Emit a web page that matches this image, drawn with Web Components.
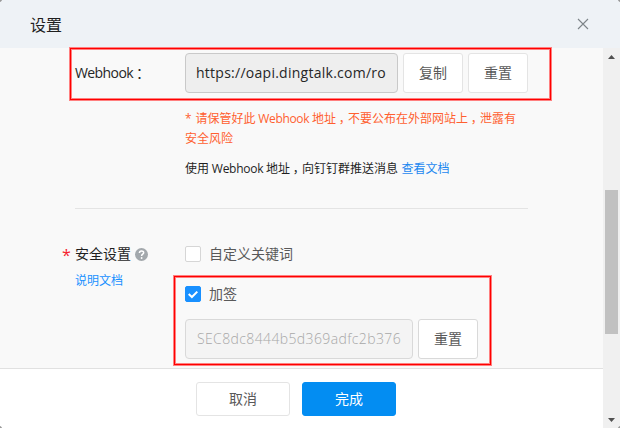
<!DOCTYPE html>
<html lang="zh-CN">
<head>
<meta charset="utf-8">
<title>设置</title>
<style>
html,body{margin:0;height:100%;background:#fff}
body{font-family:"Open Sans","Noto Sans CJK SC",sans-serif;overflow:hidden}
</style>
</head>
<body>
<settings-dialog></settings-dialog>
<script>
const define = (name, html, setup) => {
  const tpl = document.createElement('template');
  tpl.innerHTML = html;
  customElements.define(name, class extends HTMLElement {
    constructor() {
      super();
      this.attachShadow({mode: 'open'}).append(tpl.content.cloneNode(true));
    }
    connectedCallback() { if (setup) setup(this); }
  });
};

// Latin run tracked to a given width
define('latin-run', `<style>:host{display:inline-block;white-space:pre}</style><slot></slot>`, el => {
  const natural = el.getBoundingClientRect().width;
  const n = el.textContent.length;
  if (n) el.style.letterSpacing = ((+el.getAttribute('w') - natural) / n) + 'px';
});

// Full-width punctuation set toward the middle of its cell
define('wide-mark', `<style>:host{display:inline-block;box-sizing:border-box;width:1em;padding-left:.22em;font-family:"Noto Sans CJK SC",sans-serif;font-feature-settings:"halt";line-height:1}</style><slot></slot>`);

define('ui-button', `<style>
:host{display:flex;box-sizing:border-box;flex:none;width:60px;height:40px;border:1px solid #e4e4e4;border-radius:3px;background:#fff;color:#595959;font-size:14px;line-height:20px;align-items:center;justify-content:center}
:host([size=footer]){width:94px;height:34px}
:host([strong]){border-color:#d9d9d9}
:host([primary]){background:#038df2;border-color:#038df2;color:#fff}
</style><slot></slot>`);

define('ui-field', `<style>
:host{display:flex;box-sizing:border-box;flex:none;width:213px;height:40px;border:1px solid #c9c9c9;border-radius:4px;background:#eee;color:#262626;font-size:14px;line-height:20px;align-items:center;padding:0 10px;overflow:hidden}
:host([disabled]){width:228px;padding:0 11px;background:#f4f4f4;border-color:#d9d9d9;color:#a8a8a8;font-weight:300}
</style><slot></slot>`);

define('ui-check', `<style>
:host{display:flex;align-items:center;gap:8px;height:20px;font-size:14px;line-height:20px;color:#595959}
i{box-sizing:border-box;width:16px;height:16px;border:1px solid #d6d6d6;border-radius:2px;background:#fff;display:block}
svg{display:none}
:host([checked]) i{background:#1890ff;border-color:#1890ff}
:host([checked]) svg{display:block}
</style><i><svg width="14" height="14" viewBox="0 0 14 14" fill="none" stroke="#fff" stroke-width="2"><path d="M2.7 7 L5.9 10 L11.3 4.6"/></svg></i><span><slot></slot></span>`);

// Red annotation frame laid over the form
define('mark-frame', `<style>
:host{position:absolute;box-sizing:border-box;border:1px solid #f00;box-shadow:0 0 0 1px #ff8080,inset 0 0 0 1px #ff8080;pointer-events:none}
</style>`);

define('scroll-rail', `<style>
:host{display:flex;flex-direction:column;align-items:center;width:17px;background:#f0f0f0}
svg{display:block;flex:none}
.track{flex:1;padding-top:125px;box-sizing:border-box}
b{display:block;width:13px;height:144px;background:#c1c1c1}
</style>
<svg width="17" height="17" fill="#505050"><path d="M5 11h7L8.5 7z"/></svg>
<div class="track"><b></b></div>
<svg width="17" height="17" fill="#505050"><path d="M5 7h7L8.5 11z"/></svg>`);

define('dialog-header', `<style>
:host{display:flex;box-sizing:border-box;height:48px;background:#eef2f6;align-items:center;justify-content:space-between;padding:2px 31px 0 30px;font-size:16px;line-height:24px;color:#1f1f1f}
svg{margin-top:-2px}
</style><span><slot></slot></span>
<svg width="12" height="12" viewBox="0 0 12 12" fill="none" stroke="#7d8489" stroke-width="1.1"><path d="M1 1l10 10M11 1L1 11"/></svg>`);

define('form-row', `<style>
:host{display:grid;grid-template-columns:110px 1fr}
</style><slot name="label"></slot><slot></slot>`);

// Rounded window corners
define('window-corners', `<style>
:host{position:absolute;inset:0;pointer-events:none;background:
radial-gradient(circle at 0 0,#999 1.4px,transparent 2.2px),
radial-gradient(circle at 100% 0,#999 1.4px,transparent 2.2px),
radial-gradient(circle at 0 100%,#999 1.4px,transparent 2.2px),
radial-gradient(circle at 100% 100%,#999 1.4px,transparent 2.2px)}
</style>`);

define('settings-dialog', `<style>
:host{display:flex;flex-direction:column;position:relative;width:620px;height:428px;overflow:hidden}
.main{display:flex;flex:1;min-height:0}
.left{display:flex;flex-direction:column;width:603px}
.body{flex:1;background:#f9f9f9;box-sizing:border-box;padding:5px 75px 0;font-size:14px;line-height:20px;color:#262626}
.line{display:flex;gap:5px}
.label{line-height:40px}
.notes{font-size:12px;padding-left:110px;line-height:20px;padding-top:16px;white-space:nowrap;height:84px}
.warn{color:#ff5f30}
.tip{padding-top:10px;color:#1f1f1f}
a{color:#1c88f0}
hr{border:0;height:1px;background:#e4e4e4;margin:15px 0 35px}
.opts{display:flex;flex-direction:column;gap:20px}
.opts .line{margin-top:-5px}
.sec{display:flex;align-items:center;gap:4px;margin-left:-13px;color:#1f1f1f}
.req{width:9px;height:20px;color:#f5222d;font-size:16px;line-height:23px}
.doc{font-size:12px;line-height:20px;margin-top:7px}
.doc a{color:#1890ff}
footer{box-sizing:border-box;height:60px;border-top:1px solid #e1e1e1;background:#fff;padding:13px 0 0 196px;display:flex;gap:12px}
.one{left:70px;top:48px;width:481px;height:52px}
.two{left:174px;top:276px;width:317px;height:89px}
</style>
<dialog-header>设置</dialog-header>
<div class="main">
 <div class="left">
  <div class="body">
   <form-row>
    <div class="label" slot="label"><latin-run w="58">Webhook</latin-run><wide-mark>：</wide-mark></div>
    <div class="line"><ui-field><latin-run w="190">https://oapi.dingtalk.com/ro</latin-run></ui-field><ui-button>复制</ui-button><ui-button>重置</ui-button></div>
   </form-row>
   <div class="notes">
    <div class="warn"><latin-run w="10.5">* </latin-run>请保管好此<latin-run w="56.5"> Webhook </latin-run>地址<wide-mark>，</wide-mark>不要公布在外部网站上<wide-mark>，</wide-mark>泄露有<br>安全风险</div>
    <div class="tip">使用<latin-run w="57"> Webhook </latin-run>地址<wide-mark>，</wide-mark>向钉钉群推送消息<latin-run w="3.5"> </latin-run><a>查看文档</a></div>
   </div>
   <hr>
   <form-row>
    <div slot="label">
     <div class="sec"><span class="req">*</span><span>安全设置</span>
      <svg width="13" height="13" viewBox="0 0 12 12"><circle cx="6" cy="6" r="6" fill="#a3a8ac"/><path d="M4.1 4.7C4.1 2.1 8 2.2 8 4.4C8 5.8 6.1 5.6 6.1 7.3" fill="none" stroke="#fff" stroke-width="1.4"/><circle cx="6.1" cy="9.2" r=".85" fill="#fff"/></svg></div>
     <div class="doc"><a>说明文档</a></div>
    </div>
    <div class="opts"><ui-check>自定义关键词</ui-check><ui-check checked>加签</ui-check>
     <div class="line"><ui-field disabled><latin-run w="204">SEC8dc8444b5d369adfc2b376</latin-run></ui-field><ui-button strong>重置</ui-button></div></div>
   </form-row>
  </div>
  <footer><ui-button size="footer">取消</ui-button><ui-button size="footer" primary>完成</ui-button></footer>
 </div>
 <scroll-rail></scroll-rail>
</div>
<mark-frame class="one"></mark-frame>
<mark-frame class="two"></mark-frame>
<window-corners></window-corners>`);
</script>
</body>
</html>
